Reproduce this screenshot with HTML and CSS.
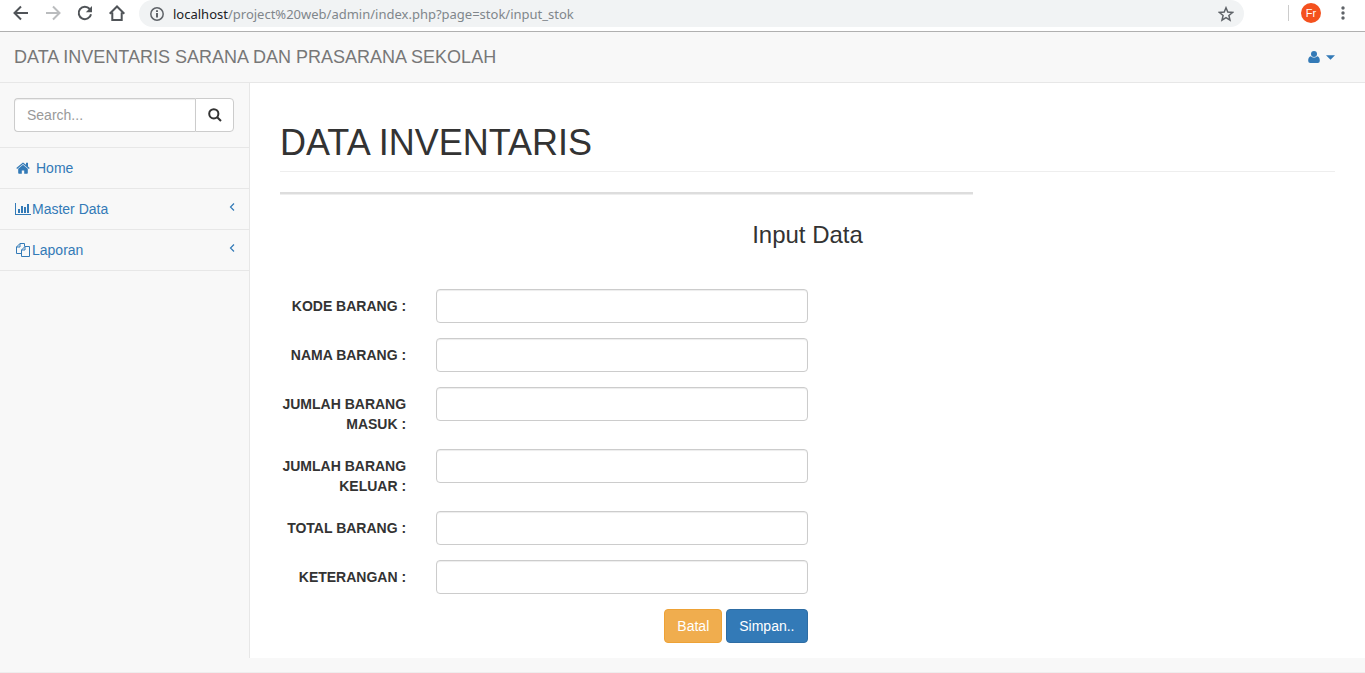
FILE: index.html
```html
<!DOCTYPE html>
<html lang="id">
<head>
<meta charset="utf-8">
<meta name="viewport" content="width=device-width, initial-scale=1">
<title>Data Inventaris</title>
<link rel="stylesheet" href="styles.css">
</head>
<body>
<header class="browser">
  <div class="browser-nav">
    <button type="button" class="tool" aria-label="Back"><svg viewBox="0 0 16 16"><path d="M15 8H2M8 1.500 1.500 8 8 14.500"/></svg></button>
    <button type="button" class="tool tool-off" aria-label="Forward"><svg viewBox="0 0 16 16"><path d="M1 8h13M8 1.500 14.500 8 8 14.500"/></svg></button>
    <button type="button" class="tool" aria-label="Reload"><svg viewBox="0 0 16 16"><path d="M14 9.200A6.200 6.200 0 1 1 12.700 4"/><path class="solid" d="M15 1v6.200H8.800z"/></svg></button>
    <button type="button" class="tool" aria-label="Home page"><svg viewBox="0 0 16 16"><path d="M.7 8.700 8 1.500l7.300 7.200M3.300 7.500v7.500h9.400V7.500"/></svg></button>
  </div>
  <div class="address">
    <svg class="info" viewBox="0 0 14 14"><circle cx="7" cy="7" r="6.200"/><path d="M7 6v4.500M7 3.300v1.600"/></svg>
    <span class="url"><span class="host">localhost</span>/project%20web/admin/index.php?page=stok/input_stok</span>
    <button type="button" class="star" aria-label="Bookmark"><svg viewBox="0 0 16 16"><path d="m8 1.800 1.800 4.300 4.700.4-3.600 3 1.100 4.600L8 11.700l-4 2.400 1.100-4.600-3.600-3 4.700-.4z"/></svg></button>
  </div>
  <div class="browser-end">
    <span class="avatar">Fr</span>
    <button type="button" class="dots" aria-label="Menu"><svg viewBox="0 0 4 16"><circle cx="2" cy="3" r="1.700"/><circle cx="2" cy="8" r="1.700"/><circle cx="2" cy="13" r="1.700"/></svg></button>
  </div>
</header>

<nav class="navbar">
  <a class="brand" href="#">DATA INVENTARIS SARANA DAN PRASARANA SEKOLAH</a>
  <a class="user" href="#" aria-label="User menu">
    <svg class="user-icon" viewBox="0 0 12 12"><circle cx="6" cy="3" r="3"/><path d="M2.800 5.300C1 5.700.2 7.300.2 9.500.2 11.200 1 12 2.300 12h7.400c1.300 0 2.100-.8 2.100-2.500 0-2.200-.8-3.800-2.600-4.200C7.600 7 4.400 7 2.800 5.300z"/></svg>
    <svg class="caret" viewBox="0 0 8 4"><path d="M0 0h8L4 4z"/></svg>
  </a>
</nav>

<div class="layout">
  <aside class="sidebar">
    <form class="search">
      <input type="text" class="search-input" placeholder="Search..." aria-label="Search">
      <button type="button" class="search-button" aria-label="Search"><svg viewBox="0 0 14 14"><circle cx="5.800" cy="5.800" r="4.600"/><path d="m9.200 9.200 3.800 3.800"/></svg></button>
    </form>
    <ul class="menu">
      <li><a href="#"><svg class="icon icon-home" viewBox="0 0 14 12"><path d="M7 2.800 2.200 6.800V11q0 .8.800.8h2.800V8.500h2.400v3.300H11q.8 0 .8-.8V6.800z"/><path d="M13.700 5.900 12 4.400V.8h-2V2.800L7.700.9q-.7-.6-1.400 0L.3 5.900l.8 1L7 2l5.900 4.900z"/></svg><span class="home-text">Home</span></a></li>
      <li><a href="#"><svg class="icon icon-wide" viewBox="0 0 16 12"><path d="M0 0h1v11h15v1H0zM3 6h2v4H3zM6 3h2v7H6zM9 4h2v6H9zM12 1h2v9h-2z"/></svg><span>Master Data</span><svg class="arrow" viewBox="0 0 6 8"><path d="M5 .5 1.500 4 5 7.500"/></svg></a></li>
      <li><a href="#"><svg class="icon icon-wide icon-line" viewBox="0 0 16 14"><path d="M9.500 3.500V.5H5L1.500 4v6.500h5M5 .5V4H1.500M10 3.500h4.500v10h-8V7zM10 3.500V7H6.500"/></svg><span>Laporan</span><svg class="arrow" viewBox="0 0 6 8"><path d="M5 .5 1.500 4 5 7.500"/></svg></a></li>
    </ul>
  </aside>

  <main class="page">
    <h1 class="page-header">DATA INVENTARIS</h1>
    <hr class="rule">
    <h3 class="form-title">Input Data</h3>
    <form class="form">
      <div class="row"><label for="kode">KODE BARANG :</label><input type="text" id="kode"></div>
      <div class="row"><label for="nama">NAMA BARANG :</label><input type="text" id="nama"></div>
      <div class="row"><label for="masuk">JUMLAH BARANG MASUK :</label><input type="text" id="masuk"></div>
      <div class="row"><label for="keluar">JUMLAH BARANG KELUAR :</label><input type="text" id="keluar"></div>
      <div class="row"><label for="total">TOTAL BARANG :</label><input type="text" id="total"></div>
      <div class="row"><label for="ket">KETERANGAN :</label><input type="text" id="ket"></div>
      <div class="actions">
        <button type="reset" class="btn btn-warning">Batal</button>
        <button type="button" class="btn btn-primary">Simpan..</button>
      </div>
    </form>
  </main>
</div>
<footer class="page-end"></footer>
</body>
</html>
```
FILE: styles.css
```css
* { box-sizing: border-box; }

body {
  margin: 0;
  background: #f8f8f8;
  color: #333;
  font: 14px/20px "Liberation Sans", Arial, sans-serif;
}

button, input { font: inherit; margin: 0; }
a { color: #337ab7; text-decoration: none; }
svg { display: block; fill: currentColor; flex: none; }

/* Browser bar */
.browser {
  display: flex;
  align-items: flex-start;
  height: 32px;
  background: #fff;
  border-bottom: 1px solid #b0b0b0;
}

.browser-nav {
  display: flex;
  gap: 16px;
  padding: 5px 14px 0 13px;
}

.tool, .star, .dots {
  padding: 0;
  border: 0;
  background: none;
  color: #5f6368;
}

.tool { color: #505458; }
.tool svg { width: 16px; height: 16px; fill: none; stroke: currentColor; stroke-width: 2; }
.tool .solid { fill: currentColor; stroke: none; }
.tool-off { color: #babcbe; }

.address {
  display: flex;
  flex: 1;
  align-items: center;
  height: 27px;
  padding: 0 10px 0 11px;
  border-radius: 14px;
  background: #f1f3f4;
}

.info { width: 14px; height: 14px; fill: none; stroke: #5f6368; stroke-width: 2; }
.info circle { stroke-width: 1.5; }

.url {
  flex: 1;
  margin-left: 9px;
  color: #80868b;
  font: 13px/20px "Noto Sans", "Open Sans", sans-serif;
}

.host { color: #202124; }
.star svg { width: 16px; height: 16px; fill: none; stroke: #5f6368; stroke-width: 1.5; }

.browser-end {
  display: flex;
  align-items: center;
  gap: 20px;
  height: 16px;
  margin: 5px 20px 0 44px;
  padding-left: 12px;
  border-left: 1px solid #ccc;
}

.avatar {
  width: 20px;
  height: 20px;
  border-radius: 50%;
  background: #f4511e;
  color: #fff;
  font-size: 11px;
  text-align: center;
}

.dots svg { width: 4px; height: 16px; }

/* Top bar */
.navbar {
  display: flex;
  align-items: center;
  justify-content: space-between;
  height: 51px;
  padding: 0 30px 0 14px;
  border-bottom: 1px solid #e7e7e7;
}

.brand { color: #777; font-size: 18px; }
.user { display: flex; align-items: center; gap: 6px; }
.user-icon { width: 12px; height: 12px; }
.caret { width: 9px; height: 5px; }

/* Sidebar */
.layout { display: flex; }
.sidebar { width: 249px; flex: none; }

.search {
  display: flex;
  padding: 15px 15px 15px 14px;
  border-bottom: 1px solid #e7e7e7;
}

.search-input {
  flex: 1;
  min-width: 0;
  height: 34px;
  padding: 6px 12px;
  border: 1px solid #ccc;
  border-right: 0;
  border-radius: 4px 0 0 4px;
  background: #fff;
  box-shadow: inset 0 1px 1px rgba(0, 0, 0, .075);
}

.search-input::placeholder { color: #999; }

.search-button {
  width: 39px;
  height: 34px;
  padding: 0 12px;
  border: 1px solid #ccc;
  border-radius: 0 4px 4px 0;
  background: #fff;
  color: #333;
}

.search-button svg { width: 14px; height: 14px; fill: none; stroke: currentColor; stroke-width: 2; }

.menu { margin: 0; padding: 0; list-style: none; }
.menu li { border-bottom: 1px solid #e7e7e7; }
.menu a { display: flex; align-items: center; padding: 10px 14px 10px 15px; }
.icon { width: 14px; height: 12px; }
.icon-home { margin-left: 1px; }
.home-text { margin-left: 6px; }
.icon-wide { width: 16px; margin-right: 1px; }
.icon-line { height: 14px; fill: none; stroke: currentColor; }
.arrow { width: 6px; height: 8px; margin: 0 0 5px auto; fill: none; stroke: currentColor; stroke-width: 1.2; }

/* Content */
.page {
  flex: 1;
  min-width: 0;
  padding: 40px 30px 15px;
  border-left: 1px solid #e7e7e7;
  background: #fff;
}

.page-header {
  margin: 0 0 20px;
  padding-bottom: 8px;
  border-bottom: 1px solid #eee;
  font-size: 36px;
  font-weight: 400;
  line-height: 40px;
}

.rule {
  width: 65.7%;
  height: 3px;
  margin: 0 0 27px;
  border: 0;
  border-bottom: 1px solid #eee;
  background: #ddd;
}

.form-title {
  margin: 0 0 41px;
  font-size: 24px;
  font-weight: 400;
  line-height: 26px;
  text-align: center;
}

.form { width: 50%; }

.row {
  display: grid;
  grid-template-columns: 126fr 371fr;
  gap: 30px;
  align-items: start;
  margin-bottom: 15px;
}

.row label { padding-top: 7px; font-weight: 700; text-align: right; }

.row input {
  width: 100%;
  height: 34px;
  padding: 6px 12px;
  border: 1px solid #ccc;
  border-radius: 4px;
  background: #fff;
  box-shadow: inset 0 1px 1px rgba(0, 0, 0, .075);
}

.actions { display: flex; justify-content: flex-end; gap: 4px; }

.btn {
  height: 34px;
  padding: 6px 12px;
  border: 1px solid;
  border-radius: 4px;
  color: #fff;
}

.btn-warning { border-color: #eea236; background: #f0ad4e; }
.btn-primary { border-color: #2e6da4; background: #337ab7; }

.page-end { height: 15px; border-bottom: 1px solid #eee; }
```
